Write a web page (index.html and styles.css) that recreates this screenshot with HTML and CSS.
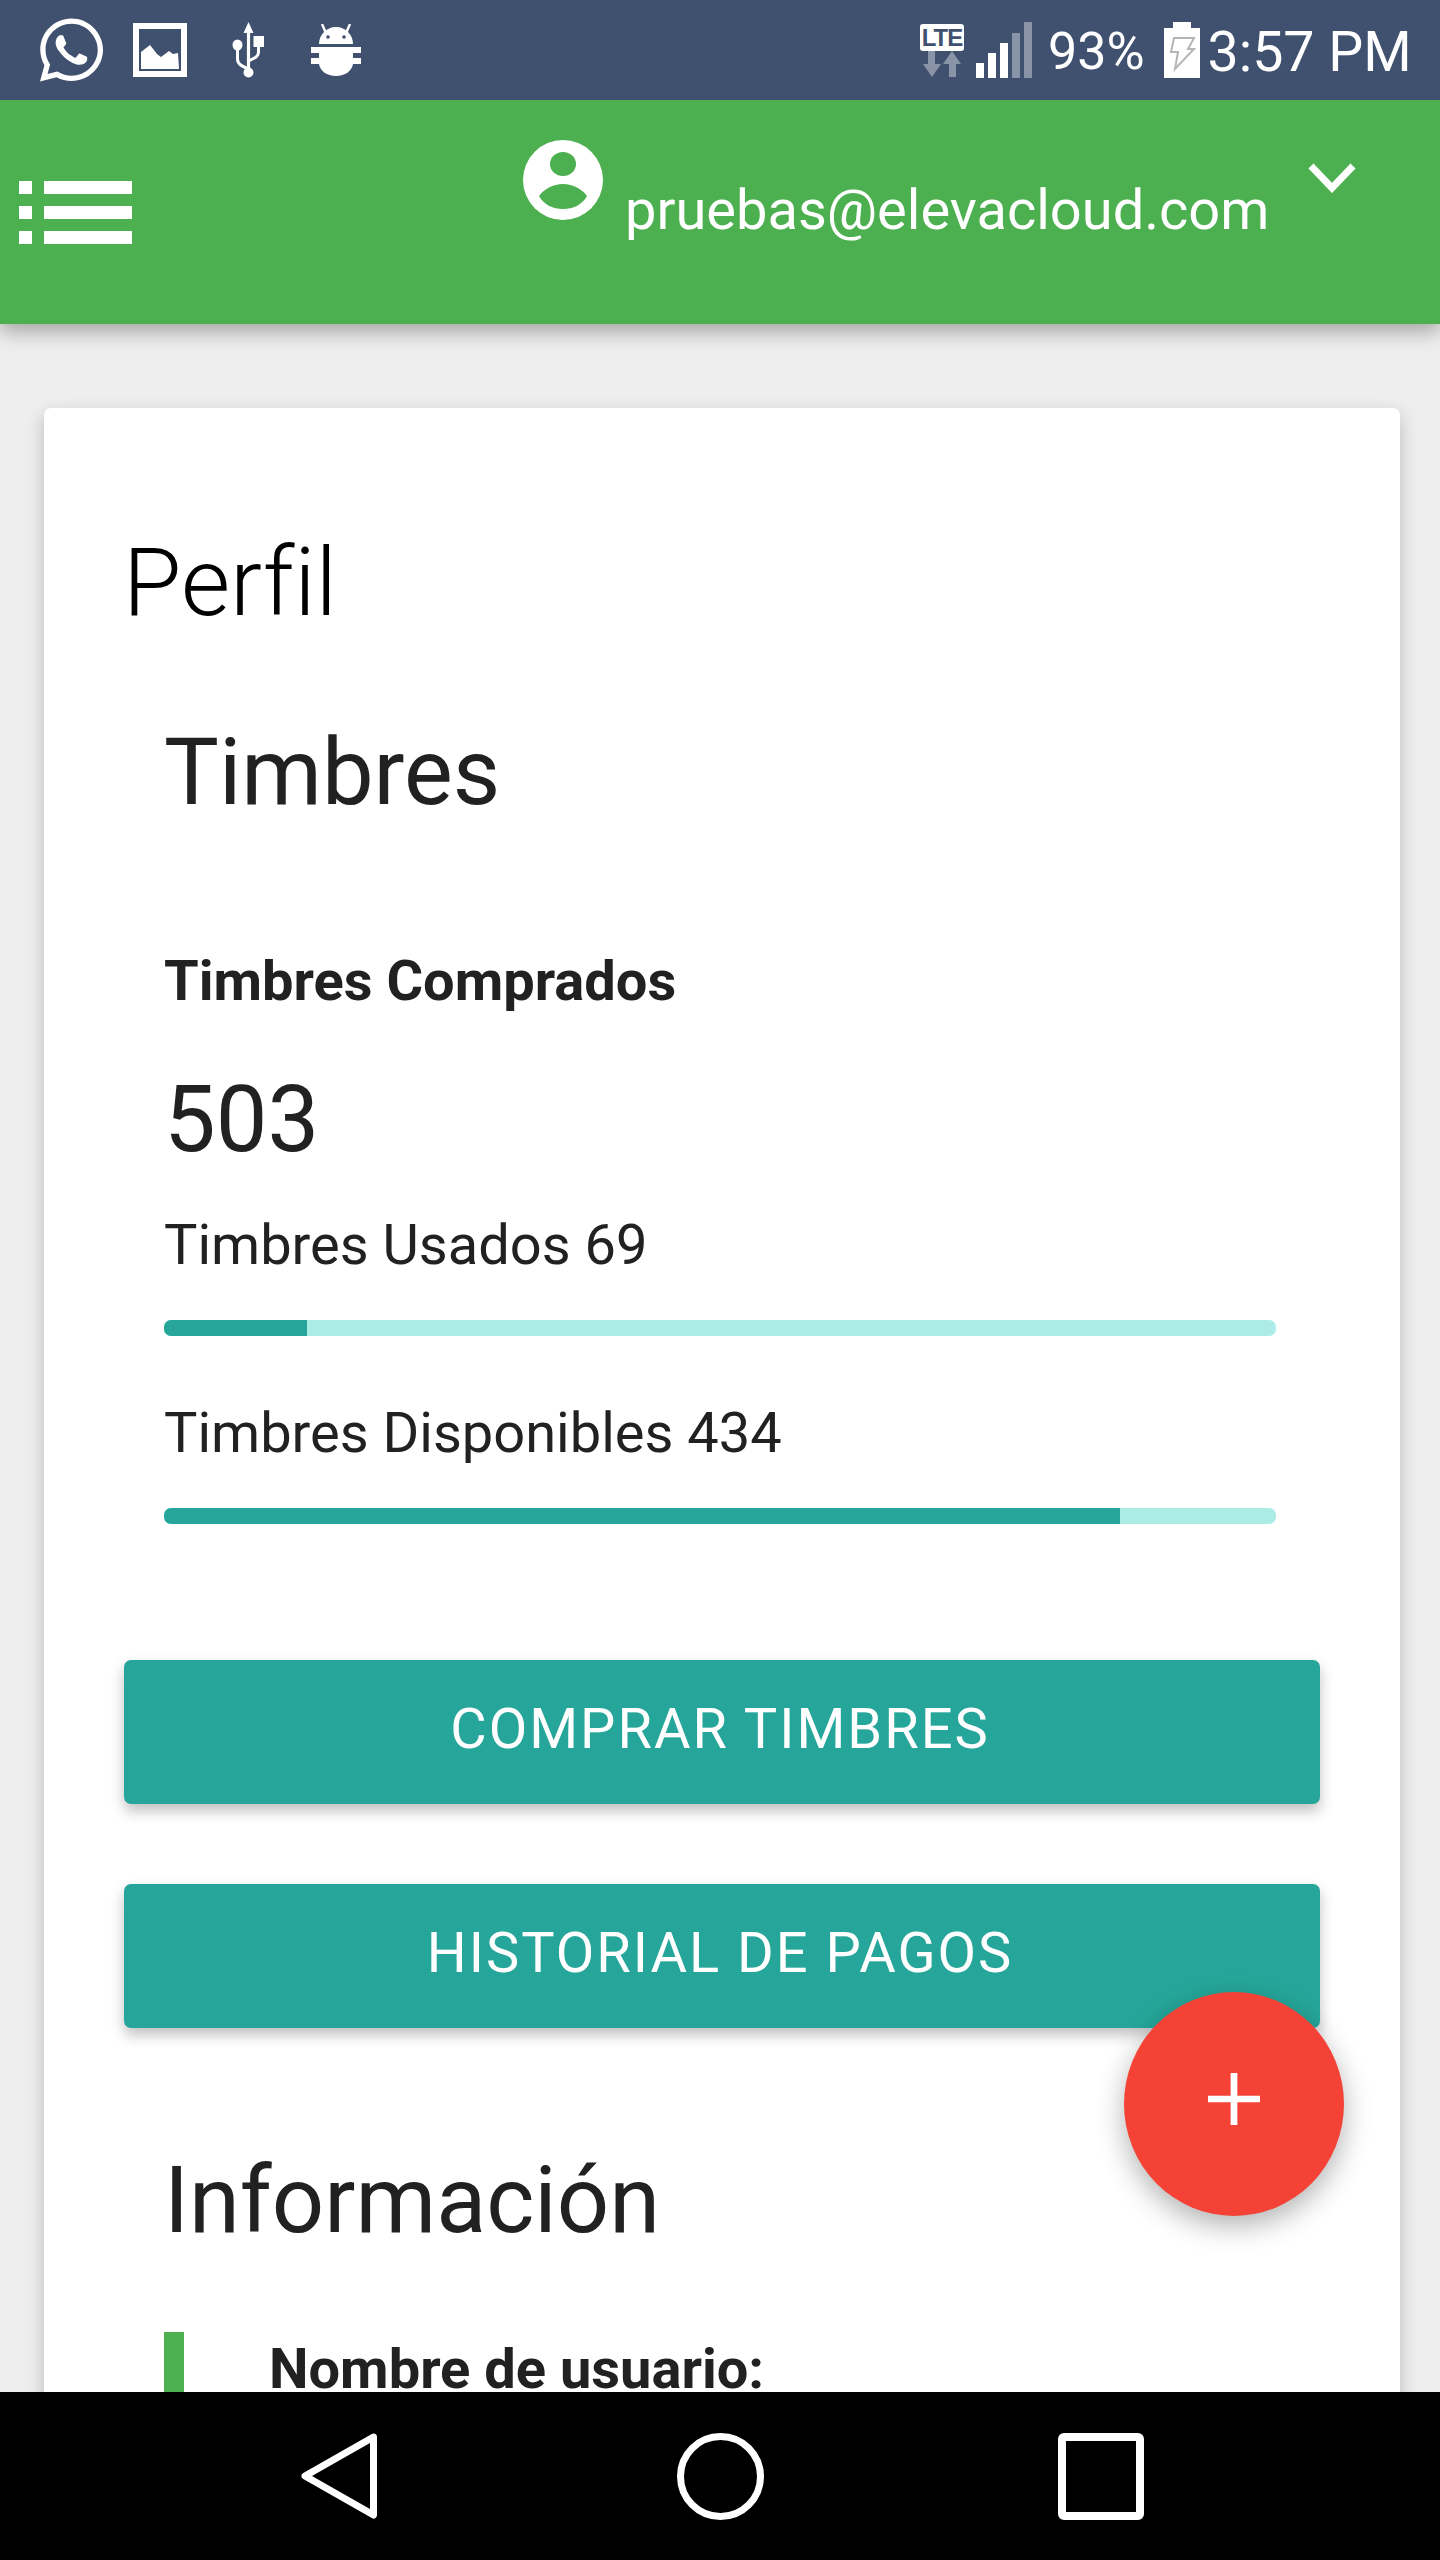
FILE: index.html
```html
<!DOCTYPE html>
<html lang="es">
<head>
<meta charset="utf-8">
<title>Perfil</title>
<link rel="stylesheet" href="styles.css">
</head>
<body>
<div class="phone">
  <div class="status">
    <svg class="i-wa" viewBox="0 32 448 448"><path fill="#fff" d="M380.9 97.1C339 55.1 283.2 32 223.9 32c-122.4 0-222 99.6-222 222 0 39.1 10.2 77.3 29.6 111L0 480l117.7-30.9c32.4 17.7 68.9 27 106.1 27h.1c122.3 0 224.1-99.6 224.1-222 0-59.3-25.2-115-67.1-157zm-157 341.6c-33.2 0-65.7-8.9-94-25.7l-6.7-4-69.8 18.3L72 359.2l-4.4-7c-18.5-29.4-28.2-63.3-28.2-98.2 0-101.7 82.8-184.5 184.6-184.5 49.3 0 95.6 19.2 130.4 54.1 34.8 34.9 56.2 81.2 56.1 130.5 0 101.8-84.9 184.6-186.6 184.6zm101.2-138.2c-5.5-2.8-32.8-16.2-37.9-18-5.1-1.9-8.8-2.8-12.5 2.8-3.7 5.6-14.3 18-17.6 21.8-3.2 3.7-6.5 4.2-12 1.4-32.6-16.3-54-29.1-75.5-66-5.7-9.8 5.7-9.1 16.3-30.3 1.8-3.7.9-6.9-.5-9.7-1.4-2.8-12.5-30.1-17.1-41.2-4.5-10.8-9.1-9.3-12.5-9.5-3.2-.2-6.9-.2-10.6-.2-3.7 0-9.7 1.4-14.8 6.9-5.1 5.6-19.4 19-19.4 46.3 0 27.3 19.9 53.7 22.6 57.4 2.8 3.7 39.1 59.7 94.8 83.8 35.2 15.2 49 16.5 66.6 13.9 10.7-1.6 32.8-13.4 37.4-26.4 4.6-13 4.6-24.1 3.2-26.4-1.3-2.500-5-3.900-10.500-6.600z"/></svg>
    <svg class="i-pic" viewBox="0 0 54 54"><path fill="#fff" fill-rule="evenodd" d="M0 0h54v54H0zM6 6v42h42V6z"/><path fill="#fff" d="M8 46V29l9-7 7 9 4 3 8-6 4 3 5-1 1 16z"/></svg>
    <svg class="i-usb" viewBox="0 0 32 56"><path fill="#fff" d="M16.500 0l5 11h-3.400v36h-3.200V11h-3.400z"/><circle fill="#fff" cx="16.500" cy="50.500" r="5"/><ellipse fill="#fff" cx="5.500" cy="23" rx="5" ry="5.500"/><rect fill="#fff" x="21.500" y="14" width="10.500" height="11"/><path fill="none" stroke="#fff" stroke-width="3" d="M5.500 26v11c0 5 4 7 11 10M26.500 24v6c0 5-4 6-10 9"/></svg>
    <svg class="i-bug" viewBox="0 0 50 52"><path fill="#fff" d="M8 20C8 11 15 3 25 3s17 8 17 17z"/><path fill="none" stroke="#fff" stroke-width="2.400" d="M11 0l3.500 8M39 0l-3.500 8"/><circle fill="#40506f" cx="17" cy="13" r="1.800"/><circle fill="#40506f" cx="33" cy="13" r="1.800"/><path fill="#fff" d="M0 23h50v6H42v5h8v6H42c-1 7-8 12-17 12S9 47 8 40H0v-6h8v-5H0z"/></svg>
    <span class="lte-group"><span class="lte">LTE</span><svg class="i-arrows" viewBox="0 0 40 26"><path fill="#8a94a9" d="M6 0h7v13h6L10 26 1 13h5zM27 26V13h-6L30 0l9 13h-5v13z"/></svg></span>
    <span class="signal"><i class="sb sb-1"></i><i class="sb sb-2"></i><i class="sb sb-3"></i><i class="sb sb-4 off"></i><i class="sb sb-5 off"></i></span>
    <span class="pct">93%</span>
    <svg class="i-bat" viewBox="0 0 36 56"><path fill="#fff" d="M9 0h18v6h9v50H0V6h9z"/><path fill="none" stroke="#b5b5b5" stroke-width="2" d="M10 16h20l-6 11h6L11 47l3-17H7z"/></svg>
    <span class="time">3:57 PM</span>
  </div>

  <header class="topbar">
    <span class="menu"><span class="menu-row"><i class="dot"></i><i class="line"></i></span><span class="menu-row"><i class="dot"></i><i class="line"></i></span><span class="menu-row"><i class="dot"></i><i class="line"></i></span></span>
    <svg class="avatar" viewBox="0 0 80 80"><circle cx="40" cy="40" r="40" fill="#fff"/><ellipse cx="40" cy="24" rx="13" ry="12" fill="#4caf50"/><path fill="#4caf50" d="M16 56c5-7 14-12 24-12s19 5 24 12c-5 9-14 13-24 13S21 65 16 56z"/></svg>
    <span class="email">pruebas@elevacloud.com</span>
    <svg class="chev" viewBox="0 0 48 30"><path fill="none" stroke="#fff" stroke-width="7" d="M3 3l21 22L45 3"/></svg>
  </header>

  <main class="content">
    <section class="card">
      <h1 class="page-title">Perfil</h1>
      <div class="inset">
        <h2 class="section-title">Timbres</h2>
        <p class="label-strong">Timbres Comprados</p>
        <p class="big-num">503</p>
        <p class="bar-label first">Timbres Usados 69</p>
        <div class="track"><div class="fill" style="width:12.9%"></div></div>
        <p class="bar-label second">Timbres Disponibles 434</p>
        <div class="track"><div class="fill" style="width:86%"></div></div>
      </div>
      <a class="btn btn-first">COMPRAR TIMBRES</a>
      <a class="btn btn-second">HISTORIAL DE PAGOS</a>
      <div class="inset">
        <h2 class="section-title info-title">Información</h2>
        <div class="info-item"><p class="info-label">Nombre de usuario:</p></div>
      </div>
    </section>
  </main>

  <button class="fab" aria-label="Agregar"><svg class="plus" viewBox="0 0 54 54"><path fill="#fff" d="M23.500 0h7v23.500H54v7H30.500V54h-7V30.500H0v-7h23.500z"/></svg></button>

  <nav class="navbar">
    <svg class="nav-back" viewBox="0 0 76 86"><path fill="none" stroke="#fff" stroke-width="7" stroke-linejoin="round" d="M72.500 4L4 43l68.500 39z"/></svg>
    <svg class="nav-home" viewBox="0 0 87 87"><circle cx="43.500" cy="43.500" r="40" fill="none" stroke="#fff" stroke-width="7"/></svg>
    <svg class="nav-recent" viewBox="0 0 86 87"><rect x="4" y="4" width="78" height="79" rx="2" fill="none" stroke="#fff" stroke-width="8"/></svg>
  </nav>
</div>
</body>
</html>
```

FILE: styles.css
```css
* { box-sizing: border-box; }
html, body { margin: 0; padding: 0; }
body { font-family: Roboto, "Liberation Sans", sans-serif; color: #212121; background: #eee; font-variant-ligatures: none; }
p, h1, h2 { margin: 0; font-weight: 400; }

.phone { position: relative; width: 1440px; height: 2560px; display: flex; flex-direction: column; overflow: hidden; background: #eee; }

/* status bar */
.status { flex: 0 0 100px; height: 100px; background: #40506f; display: flex; align-items: center; padding-left: 40px; color: #fff; position: relative; z-index: 3; }
.status svg { display: block; flex: none; }
.i-wa { width: 63px; height: 64px; }
.i-pic { width: 54px; height: 54px; margin-left: 30px; }
.i-usb { width: 32px; height: 56px; margin-left: 45px; }
.i-bug { width: 50px; height: 52px; margin-left: 47px; }
.lte-group { margin-left: 559px; width: 44px; display: flex; flex-direction: column; align-items: center; }
.lte { width: 44px; height: 27px; background: #fff; border-radius: 3px; color: #40506f; font: 700 24px/27px "Liberation Sans Narrow", "Liberation Sans", sans-serif; text-align: center; letter-spacing: -1px; }
.i-arrows { width: 40px; height: 26px; }
.signal { margin-left: 12px; height: 56px; display: flex; align-items: flex-end; gap: 4px; }
.sb { display: block; width: 8px; background: #fff; }
.sb.off { background: #8a94a9; }
.sb-1 { height: 15px; }
.sb-2 { height: 25px; }
.sb-3 { height: 35px; }
.sb-4 { height: 45px; }
.sb-5 { height: 56px; }
.pct { margin-left: 16px; font-size: 52px; line-height: 104px; align-self: flex-start; }
.i-bat { width: 36px; height: 56px; margin-left: 19px; }
.time { margin-left: 8px; font-size: 55.500px; line-height: 106px; align-self: flex-start; }

/* header */
.topbar { flex: 0 0 224px; height: 224px; background: #4caf50; display: flex; align-items: flex-start; box-shadow: 0 8px 18px rgba(0,0,0,.3); position: relative; z-index: 2; color: #fff; }
.menu { margin: 81px 0 0 19px; width: 113px; display: flex; flex-direction: column; gap: 12px; }
.menu-row { display: flex; gap: 12px; height: 13px; }
.dot { display: block; width: 13px; background: #fff; }
.line { display: block; flex: 1; background: #fff; }
.avatar { width: 80px; height: 80px; margin: 40px 0 0 391px; flex: none; }
.email { margin: 75px 0 0 22px; font-size: 56px; line-height: 70px; white-space: nowrap; }
.chev { width: 48px; height: 30px; margin: 63px 0 0 39px; flex: none; }

/* card */
.content { flex: 1; min-height: 0; overflow: hidden; padding: 84px 40px 0 44px; }
.card { background: #fff; border-radius: 7px; padding: 120px 80px 40px; box-shadow: 0 7px 18px rgba(0,0,0,.22); }
.page-title { font-size: 95px; line-height: 110px; font-weight: 300; color: #000; margin-left: -1px; }
.inset { padding: 0 44px 0 40px; }
.section-title { font-size: 92px; line-height: 118px; margin-top: 76px; }
.label-strong { font-size: 56px; line-height: 70px; font-weight: 700; margin-top: 114px; }
.big-num { font-size: 92px; line-height: 100px; margin-top: 54px; }
.bar-label { font-size: 56px; line-height: 70px; }
.bar-label.first { margin-top: 40px; }
.bar-label.second { margin-top: 62px; }
.track { height: 16px; margin-top: 40px; background: #acece6; border-radius: 7px; overflow: hidden; }
.fill { height: 100%; background: #26a69a; }
.btn { display: block; height: 144px; line-height: 138px; padding-right: 4px; background: #26a69a; color: #fff; text-align: center; font-size: 56px; letter-spacing: 2px; border-radius: 7px; box-shadow: 0 7px 14px rgba(0,0,0,.25); }
.btn-first { margin-top: 136px; }
.btn-second { margin-top: 80px; }
.section-title.info-title { margin-top: 114px; }
.info-item { margin-top: 72px; border-left: 20px solid #4caf50; padding-left: 85px; padding-top: 2px; height: 200px; }
.info-label { font-size: 56px; line-height: 70px; font-weight: 700; }

/* fab */
.fab { position: absolute; left: 1124px; top: 1992px; width: 220px; height: 224px; border: 0; padding: 0; border-radius: 50%; background: #f44336; box-shadow: 0 10px 28px rgba(0,0,0,.3); display: flex; align-items: center; justify-content: center; z-index: 1; }
.plus { width: 54px; height: 52px; display: block; margin-bottom: 10px; }

/* nav */
.navbar { flex: 0 0 168px; height: 168px; background: #000; display: flex; align-items: flex-start; padding: 41px 0 0 301px; position: relative; z-index: 3; }
.navbar svg { display: block; flex: none; }
.nav-back { width: 76px; height: 86px; }
.nav-home { width: 87px; height: 87px; margin-left: 300px; }
.nav-recent { width: 86px; height: 87px; margin-left: 294px; }
```
